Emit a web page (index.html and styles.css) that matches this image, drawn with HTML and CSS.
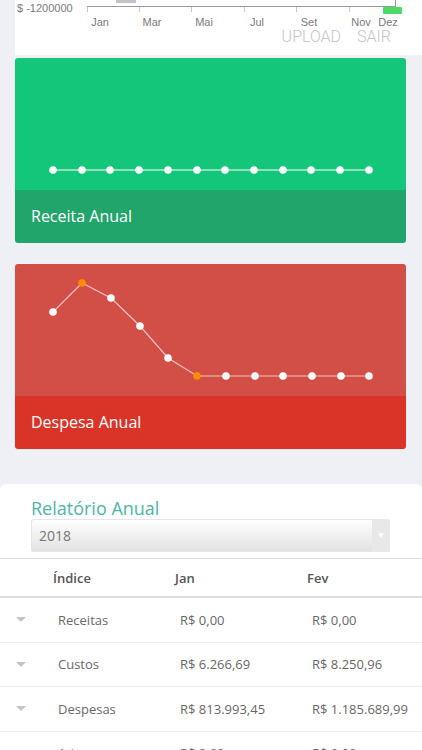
FILE: index.html
```html
<!DOCTYPE html>
<html lang="pt-BR">
<head>
    <meta charset="UTF-8">
    <meta name="viewport" content="width=device-width, initial-scale=1.0">
    <title>Relatório</title>
    <link rel="stylesheet" href="styles.css">
</head>
<body>

    <div class="top-panel">
        <svg class="month-axis" width="407" height="28" viewBox="0 0 407 28">
            <rect x="101" y="0" width="20" height="3" fill="#c3c3cc"/>
            <line x1="72" y1="6.5" x2="380" y2="6.5" stroke="#9a9a9a" stroke-width="1"/>
            <line x1="380.5" y1="0" x2="380.5" y2="7" stroke="#9a9a9a" stroke-width="1"/>
            <g stroke="#c8c8c8" stroke-width="1">
                <line x1="72.5" y1="7" x2="72.5" y2="12"/>
                <line x1="124.5" y1="7" x2="124.5" y2="12"/>
                <line x1="176.5" y1="7" x2="176.5" y2="12"/>
                <line x1="229.5" y1="7" x2="229.5" y2="12"/>
                <line x1="281.5" y1="7" x2="281.5" y2="12"/>
                <line x1="334.5" y1="7" x2="334.5" y2="12"/>
            </g>
            <rect x="368" y="7" width="19" height="7" rx="1" fill="#4cd964"/>
            <text x="2" y="12" class="axis-text">$ -1200000</text>
            <g class="axis-text" text-anchor="middle">
                <text x="85" y="26">Jan</text>
                <text x="137" y="26">Mar</text>
                <text x="189" y="26">Mai</text>
                <text x="242" y="26">Jul</text>
                <text x="294" y="26">Set</text>
                <text x="346" y="26">Nov</text>
                <text x="373" y="26">Dez</text>
            </g>
        </svg>
        <div class="top-actions">
            <span class="link-btn">UPLOAD</span>
            <span class="link-btn">SAIR</span>
        </div>
    </div>

    <div class="card card-green">
        <div class="card-chart">
            <svg width="391" height="132" viewBox="0 0 391 132">
                <polyline points="38,112 67,112 95,112 124,112 153,112 182,112 210,112 239,112 268,112 296,112 325,112 354,112" fill="none" stroke="#ffffff" stroke-width="1.2"/>
                <g fill="#ffffff">
                    <circle cx="38" cy="112" r="3.8"/>
                    <circle cx="67" cy="112" r="3.8"/>
                    <circle cx="95" cy="112" r="3.8"/>
                    <circle cx="124" cy="112" r="3.8"/>
                    <circle cx="153" cy="112" r="3.8"/>
                    <circle cx="182" cy="112" r="3.8"/>
                    <circle cx="210" cy="112" r="3.8"/>
                    <circle cx="239" cy="112" r="3.8"/>
                    <circle cx="268" cy="112" r="3.8"/>
                    <circle cx="296" cy="112" r="3.8"/>
                    <circle cx="325" cy="112" r="3.8"/>
                    <circle cx="354" cy="112" r="3.8"/>
                </g>
            </svg>
        </div>
        <div class="card-footer">Receita Anual</div>
    </div>

    <div class="card card-red">
        <div class="card-chart">
            <svg width="391" height="132" viewBox="0 0 391 132">
                <polyline points="38,48 67,19 96,34 125,62 153,94 182,112 211,112 240,112 268,112 297,112 326,112 354,112" fill="none" stroke="#f4c1bc" stroke-width="1.2"/>
                <g fill="#ffffff">
                    <circle cx="38" cy="48" r="3.8"/>
                    <circle cx="96" cy="34" r="3.8"/>
                    <circle cx="125" cy="62" r="3.8"/>
                    <circle cx="153" cy="94" r="3.8"/>
                    <circle cx="211" cy="112" r="3.8"/>
                    <circle cx="240" cy="112" r="3.8"/>
                    <circle cx="268" cy="112" r="3.8"/>
                    <circle cx="297" cy="112" r="3.8"/>
                    <circle cx="326" cy="112" r="3.8"/>
                    <circle cx="354" cy="112" r="3.8"/>
                </g>
                <g fill="#ff8c00">
                    <circle cx="67" cy="19" r="3.8"/>
                    <circle cx="182" cy="112" r="3.8"/>
                </g>
            </svg>
        </div>
        <div class="card-footer">Despesa Anual</div>
    </div>

    <div class="report">
        <h2 class="report-title">Relatório Anual</h2>
        <div class="year-select">
            <span class="year-value">2018</span>
            <span class="year-arrow"></span>
        </div>

        <div class="report-table">
            <div class="table-head">
                <span></span>
                <span>Índice</span>
                <span>Jan</span>
                <span>Fev</span>
            </div>
            <div class="table-row">
                <span class="caret"></span>
                <span>Receitas</span>
                <span>R$ 0,00</span>
                <span>R$ 0,00</span>
            </div>
            <div class="table-row">
                <span class="caret"></span>
                <span>Custos</span>
                <span>R$ 6.266,69</span>
                <span>R$ 8.250,96</span>
            </div>
            <div class="table-row">
                <span class="caret"></span>
                <span>Despesas</span>
                <span>R$ 813.993,45</span>
                <span>R$ 1.185.689,99</span>
            </div>
            <div class="table-row">
                <span class="caret"></span>
                <span>Ativos</span>
                <span>R$ 0,00</span>
                <span>R$ 0,00</span>
            </div>
        </div>
    </div>

</body>
</html>
```

FILE: styles.css
```css
body {
    margin: 0;
    background: #eff0f5;
    font-family: "Open Sans", sans-serif;
    overflow: hidden;
}

.top-panel {
    margin-left: 15px;
    height: 55px;
    background: #ffffff;
}

.month-axis {
    display: block;
}

.axis-text {
    font-family: "Liberation Sans", Arial, sans-serif;
    font-size: 11px;
    fill: #7a7a7a;
}

.top-actions {
    display: flex;
    justify-content: flex-end;
    gap: 16px;
    padding-right: 31px;
    height: 18px;
    line-height: 18px;
}

.link-btn {
    font-family: Roboto, sans-serif;
    font-weight: 300;
    font-size: 16px;
    color: #c4c4c9;
}

.card {
    margin: 3px 16px 0 15px;
    border-radius: 3px;
    overflow: hidden;
}

.card-red {
    margin-top: 21px;
}

.card-chart svg {
    display: block;
}

.card-footer {
    height: 53px;
    line-height: 53px;
    padding-left: 16px;
    color: #ffffff;
    font-size: 16px;
}

.card-green .card-chart { background: #14c67a; }
.card-green .card-footer { background: #22a56b; }

.card-red .card-chart { background: #d14f46; }
.card-red .card-footer { background: #da3428; }

.report {
    margin-top: 35px;
    background: #ffffff;
    border-radius: 6px 6px 0 0;
    padding-top: 14px;
}

.report-title {
    margin: 0 0 0 31px;
    font-size: 18px;
    font-weight: 400;
    line-height: 21px;
    color: #4db6a6;
}

.year-select {
    margin: 0 32px 6px 31px;
    height: 33px;
    display: flex;
    align-items: center;
    justify-content: space-between;
    border-radius: 3px;
    background: linear-gradient(#ffffff, #e1e1e1);
    box-shadow: inset 0 0 0 1px #e6e6e6;
}

.year-value {
    padding-left: 8px;
    font-size: 14px;
    color: #777777;
}

.year-arrow {
    width: 18px;
    height: 33px;
    background: #e8e8e8;
    border-radius: 0 3px 3px 0;
    position: relative;
}

.year-arrow::after {
    content: "";
    position: absolute;
    left: 6px;
    top: 14px;
    border-left: 3px solid transparent;
    border-right: 3px solid transparent;
    border-top: 5px solid #ffffff;
}

.report-table {
    border-top: 1px solid #dddddd;
    font-size: 13px;
}

.table-head,
.table-row {
    display: grid;
    grid-template-columns: 48px 122px 132px 1fr;
    align-items: center;
    white-space: nowrap;
}

.table-head {
    height: 37px;
    border-bottom: 2px solid #dedede;
    font-weight: 600;
    color: #555555;
}

.table-head span {
    padding-left: 5px;
}

.table-row {
    height: 43.5px;
    border-bottom: 1px solid #ececec;
    color: #686868;
}

.table-row span {
    padding-left: 10px;
}

.table-row .caret {
    padding-left: 0;
    margin-left: 16px;
    width: 0;
    height: 0;
    border-left: 5px solid transparent;
    border-right: 5px solid transparent;
    border-top: 5px solid #c3c3cb;
}
```
